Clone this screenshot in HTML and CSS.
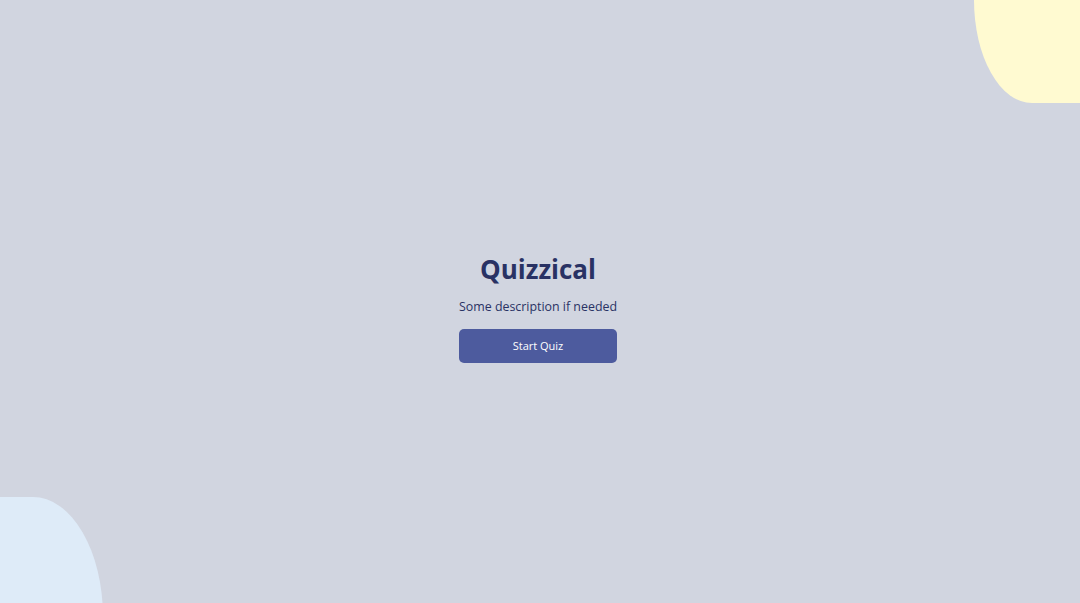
FILE: index.html
```html
<!DOCTYPE html>
<html lang="en">
<head>
    <meta charset="UTF-8">
    <meta name="viewport" content="width=device-width, initial-scale=1.0">
    <title>Quizzical</title>
    <link rel="stylesheet" href="styles.css">
</head>
<body>
    <div class="blob blob-top"></div>
    <div class="blob blob-bottom"></div>
    <main class="start-screen">
        <h1 class="title">Quizzical</h1>
        <p class="description">Some description if needed</p>
        <button class="start-btn">Start Quiz</button>
    </main>
</body>
</html>
```

FILE: styles.css
```css
body {
    margin: 0;
    padding: 0;
    background-color: #d1d5e0;
    font-family: "Open Sans", "DejaVu Sans", sans-serif;
    color: #293264;
    overflow: hidden;
}
.blob {
    position: absolute;
}
.blob-top {
    top: 0;
    right: 0;
    width: 106px;
    height: 103px;
    background-color: #fffad1;
    border-bottom-left-radius: 58px 103px;
}
.blob-bottom {
    bottom: -17px;
    left: 0;
    width: 103px;
    height: 123px;
    background-color: #deebf8;
    border-top-right-radius: 70px 120px;
}
.start-screen {
    min-height: 100vh;
    display: flex;
    flex-direction: column;
    align-items: center;
    justify-content: center;
    padding: 10px 4px 0 0;
    box-sizing: border-box;
}
.title {
    margin: 0;
    font-size: 26px;
    font-weight: 700;
}
.description {
    margin: 11px 0 14px;
    font-size: 12.4px;
}
.start-btn {
    width: 158px;
    height: 34px;
    border: none;
    border-radius: 5px;
    background-color: #4d5b9e;
    color: #ffffff;
    font-family: inherit;
    font-size: 11px;
    cursor: pointer;
}
```
